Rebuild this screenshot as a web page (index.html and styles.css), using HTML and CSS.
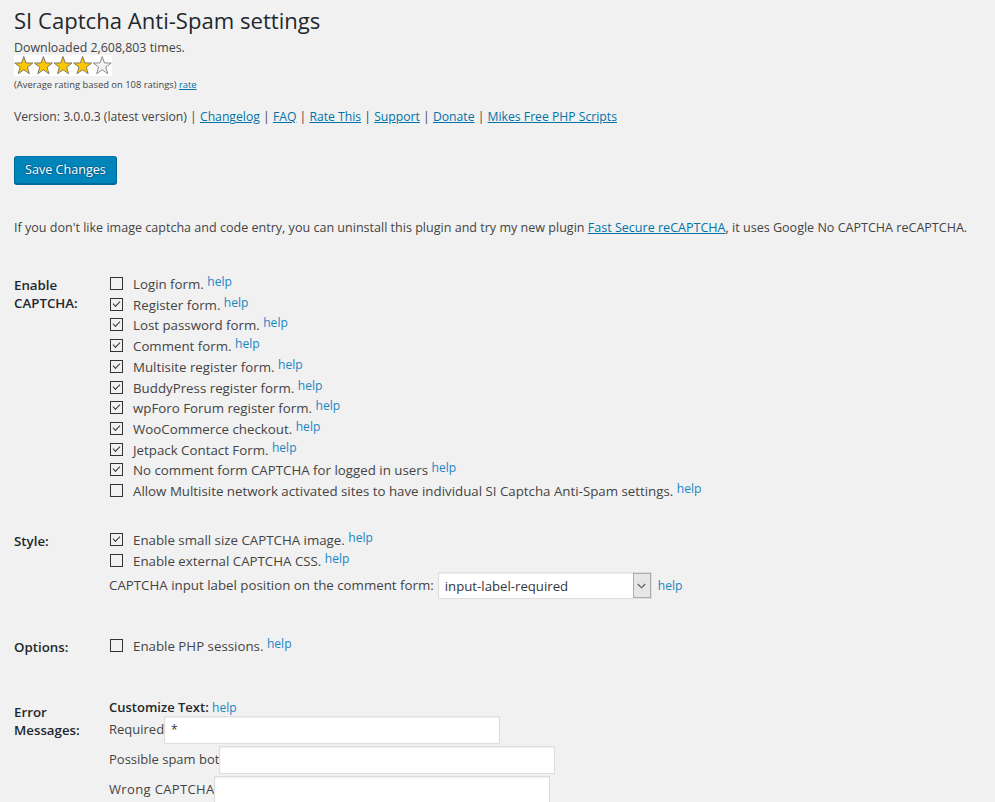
FILE: index.html
```html
<!DOCTYPE html>
<html lang="en">
<head>
<meta charset="utf-8">
<title>SI Captcha Anti-Spam settings</title>
<link rel="stylesheet" href="styles.css">
</head>
<body>
<div class="wrap">
  <h1 class="title">SI Captcha Anti-Spam settings</h1>
  <div class="downloads">Downloaded 2,608,803 times.</div>
  <div class="stars">
    <svg width="98" height="21" viewBox="0 0 98 21" aria-hidden="true">
      <defs>
        <polygon id="star" points="0,-9.5 2.23,-3.07 9.03,-2.94 3.61,1.17 5.58,7.69 0,3.8 -5.58,7.69 -3.61,1.17 -9.03,-2.94 -2.23,-3.07"/>
      </defs>
      <rect width="98" height="21" fill="#ffffff"/>
      <use href="#star" x="9.8" y="11" fill="#ffc700" stroke="#7d7a6a" stroke-width="1"/>
      <use href="#star" x="29.4" y="11" fill="#ffc700" stroke="#7d7a6a" stroke-width="1"/>
      <use href="#star" x="49" y="11" fill="#ffc700" stroke="#7d7a6a" stroke-width="1"/>
      <use href="#star" x="68.6" y="11" fill="#ffc700" stroke="#7d7a6a" stroke-width="1"/>
      <use href="#star" x="88.2" y="11" fill="#f2f2f2" stroke="#8c8c8c" stroke-width="1"/>
    </svg>
  </div>
  <div class="avg">(Average rating based on 108 ratings) <a href="#" class="link">rate</a></div>
  <div class="version">Version: 3.0.0.3 (latest version) | <a href="#" class="link">Changelog</a> | <a href="#" class="link">FAQ</a> | <a href="#" class="link">Rate This</a> | <a href="#" class="link">Support</a> | <a href="#" class="link">Donate</a> | <a href="#" class="link">Mikes Free PHP Scripts</a></div>
  <button class="button-primary" type="button">Save Changes</button>
  <p class="intro">If you don't like image captcha and code entry, you can uninstall this plugin and try my new plugin <a href="#" class="link">Fast Secure reCAPTCHA</a>, it uses Google No CAPTCHA reCAPTCHA.</p>

  <div class="section sec-enable">
    <div class="th">Enable CAPTCHA:</div>
    <div class="td">
      <div class="row"><input type="checkbox" class="cb"><label>Login form.</label> <a class="help">help</a></div>
      <div class="row"><input type="checkbox" class="cb" checked><label>Register form.</label> <a class="help">help</a></div>
      <div class="row"><input type="checkbox" class="cb" checked><label>Lost password form.</label> <a class="help">help</a></div>
      <div class="row"><input type="checkbox" class="cb" checked><label>Comment form.</label> <a class="help">help</a></div>
      <div class="row"><input type="checkbox" class="cb" checked><label>Multisite register form.</label> <a class="help">help</a></div>
      <div class="row"><input type="checkbox" class="cb" checked><label>BuddyPress register form.</label> <a class="help">help</a></div>
      <div class="row"><input type="checkbox" class="cb" checked><label>wpForo Forum register form.</label> <a class="help">help</a></div>
      <div class="row"><input type="checkbox" class="cb" checked><label>WooCommerce checkout.</label> <a class="help">help</a></div>
      <div class="row"><input type="checkbox" class="cb" checked><label>Jetpack Contact Form.</label> <a class="help">help</a></div>
      <div class="row"><input type="checkbox" class="cb" checked><label>No comment form CAPTCHA for logged in users</label> <a class="help">help</a></div>
      <div class="row"><input type="checkbox" class="cb"><label>Allow Multisite network activated sites to have individual SI Captcha Anti-Spam settings.</label> <a class="help">help</a></div>
    </div>
  </div>

  <div class="section sec-style">
    <div class="th">Style:</div>
    <div class="td">
      <div class="row"><input type="checkbox" class="cb" checked><label>Enable small size CAPTCHA image.</label> <a class="help">help</a></div>
      <div class="row"><input type="checkbox" class="cb"><label>Enable external CAPTCHA CSS.</label> <a class="help">help</a></div>
      <div class="select-row">
        <label>CAPTCHA input label position on the comment form:</label>
        <span class="select">
          <select><option>input-label-required</option></select>
          <span class="arrow"><svg width="9" height="6" viewBox="0 0 9 6" aria-hidden="true"><polyline points="0.8,1 4.5,4.8 8.2,1" fill="none" stroke="#555" stroke-width="1.1"/></svg></span>
        </span>
        <a class="help plain">help</a>
      </div>
    </div>
  </div>

  <div class="section sec-options">
    <div class="th">Options:</div>
    <div class="td">
      <div class="row"><input type="checkbox" class="cb"><label>Enable PHP sessions.</label> <a class="help">help</a></div>
    </div>
  </div>

  <div class="section sec-errors">
    <div class="th">Error Messages:</div>
    <div class="td">
      <div class="customize"><strong>Customize Text:</strong> <a class="help plain">help</a></div>
      <div class="field"><label>Required</label><input type="text" class="text" value="*"></div>
      <div class="field"><label>Possible spam bot</label><input type="text" class="text" value=""></div>
      <div class="field"><label class="wide">Wrong CAPTCHA</label><input type="text" class="text" value=""></div>
    </div>
  </div>
</div>
</body>
</html>
```
FILE: styles.css
```css
html, body {
  margin: 0;
  padding: 0;
  background: #f1f1f1;
}
body {
  font-family: "Open Sans", "Noto Sans", sans-serif;
  font-size: 12.1px;
  color: #444;
  overflow: hidden;
}
.wrap {
  padding: 0 14px;
}
.title {
  margin: 5px 0 0;
  font-size: 22.1px;
  font-weight: 400;
  line-height: 30px;
  color: #23282d;
}
.downloads {
  margin-top: 4.5px;
  font-size: 12.4px;
  line-height: 15px;
}
.stars {
  height: 21px;
}
.stars svg {
  display: block;
}
.avg {
  margin-top: 3.7px;
  font-size: 9.4px;
  line-height: 12px;
}
.link {
  color: #0073aa;
  text-decoration: underline;
}
.version {
  margin-top: 17.3px;
  font-size: 12.2px;
  line-height: 17px;
}
.button-primary {
  display: block;
  margin-top: 30.5px;
  height: 28px;
  padding: 0 10px 1px;
  font-family: inherit;
  font-size: 12.6px;
  line-height: 26px;
  color: #fff;
  background: #0085ba;
  border: 1px solid #0073aa;
  border-color: #0073aa #006799 #006799;
  border-radius: 3px;
  box-shadow: 0 1px 0 #006799;
  text-shadow: 0 -1px 1px #006799, 1px 0 1px #006799, 0 1px 1px #006799, -1px 0 1px #006799;
  cursor: pointer;
}
.intro {
  margin: 35.5px 0 0;
  font-size: 12.55px;
  line-height: 17px;
}
.section {
  display: grid;
  grid-template-columns: 95px 1fr;
}
.th {
  padding: 2px 10px 0 0;
  font-size: 13.3px;
  font-weight: 600;
  line-height: 18px;
  color: #23282d;
}
.td {
  font-size: 13.3px;
}
.sec-enable { margin-top: 37.5px; }
.sec-style { margin-top: 28.3px; }
.sec-options { margin-top: 36.5px; }
.sec-errors { margin-top: 41.6px; }
.sec-errors .th { padding-top: 4px; }

.row {
  line-height: 20.7px;
  white-space: nowrap;
}
.cb {
  -webkit-appearance: none;
  appearance: none;
  display: inline-block;
  position: relative;
  box-sizing: border-box;
  width: 13px;
  height: 13px;
  margin: 0 10px 0 1px;
  padding: 0;
  vertical-align: -1px;
  border: 1px solid #333;
  border-radius: 0;
  background: transparent;
}
.cb:checked::before {
  content: "";
  position: absolute;
  left: 2px;
  top: 2px;
  width: 6px;
  height: 3px;
  border-left: 1px solid #333;
  border-bottom: 1px solid #333;
  transform: rotate(-45deg);
}
.help {
  font-size: 12.1px;
  color: #1a86c4;
  cursor: pointer;
  line-height: 12px;
  vertical-align: 3px;
}
.help.plain {
  vertical-align: baseline;
}
.select-row {
  display: flex;
  align-items: center;
  height: 28px;
  margin-top: 0.5px;
  line-height: 17px;
  white-space: nowrap;
}
.select {
  display: flex;
  box-sizing: border-box;
  width: 214px;
  height: 27px;
  margin: 0 6px 0 4px;
  background: #fff;
  border: 1px solid #ddd;
  box-shadow: inset 0 1px 2px rgba(0, 0, 0, 0.07);
}
.select select {
  -webkit-appearance: none;
  appearance: none;
  flex: 1;
  min-width: 0;
  margin: 0;
  padding: 0 0 0 6px;
  border: 0;
  background: transparent;
  font-family: inherit;
  font-size: 13.2px;
  color: #32373c;
  outline: none;
}
.arrow {
  display: flex;
  align-items: center;
  justify-content: center;
  width: 16px;
  background: #e6e6e6;
  border: 1px solid #adadad;
}
.customize {
  font-size: 13px;
  line-height: 17px;
}
.customize strong {
  font-weight: 600;
  color: #23282d;
}
.field {
  display: flex;
  align-items: baseline;
  font-size: 13px;
  white-space: nowrap;
}
.customize + .field {
  margin-top: 0;
}
.field + .field {
  margin-top: 2px;
}
.field .wide {
  letter-spacing: 0.35px;
}
.text {
  box-sizing: border-box;
  width: 336px;
  height: 28px;
  margin: 0;
  padding: 2px 6px;
  font-family: inherit;
  font-size: 12.1px;
  color: #32373c;
  background: #fff;
  border: 1px solid #ddd;
  border-radius: 0;
  box-shadow: inset 0 1px 2px rgba(0, 0, 0, 0.07);
  outline: none;
}
```
